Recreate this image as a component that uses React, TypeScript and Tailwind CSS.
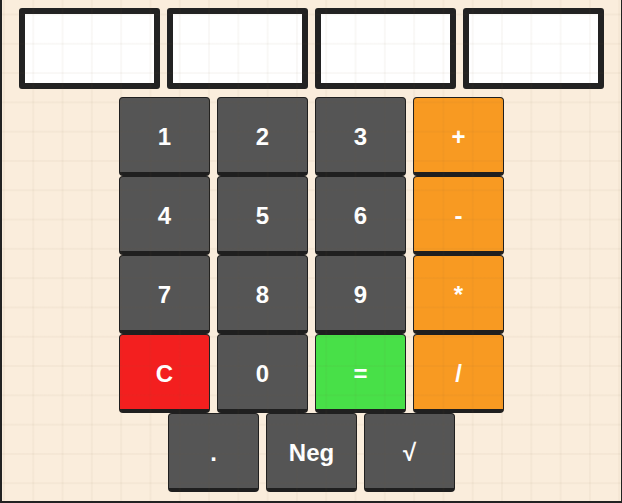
import React from 'react';

type Key = { label: string; tone?: 'num' | 'op' | 'clear' | 'eq' };

const rows: Key[][] = [
  [{ label: '1' }, { label: '2' }, { label: '3' }, { label: '+', tone: 'op' }],
  [{ label: '4' }, { label: '5' }, { label: '6' }, { label: '-', tone: 'op' }],
  [{ label: '7' }, { label: '8' }, { label: '9' }, { label: '*', tone: 'op' }],
  [{ label: 'C', tone: 'clear' }, { label: '0' }, { label: '=', tone: 'eq' }, { label: '/', tone: 'op' }],
  [{ label: '.' }, { label: 'Neg' }, { label: '√' }],
];

const toneClass = {
  num: 'bg-[#555555]',
  op: 'bg-[#f89a22]',
  clear: 'bg-[#f31f1f]',
  eq: 'bg-[#48e048]',
};

function CalcKey({ k }: { k: Key }) {
  return (
    <button
      className={`w-[91px] h-[79px] pt-1 rounded-[4px] border border-b-[4px] border-[#1f1f1f] text-white font-bold text-[24px] flex items-center justify-center ${toneClass[k.tone ?? 'num']}`}
    >
      {k.label}
    </button>
  );
}

export default function App() {
  return (
    <div
      className="relative w-[622px] h-[503px] overflow-hidden bg-[#faeddc] border-l-2 border-b-2 border-r border-[#222222]"
      style={{ fontFamily: '"Liberation Sans", Arial, sans-serif' }}
    >
      <div className="flex flex-col items-center pt-[8px]">
        <div className="flex gap-[7px]">
          {[0, 1, 2, 3].map((i) => (
            <div key={i} className="w-[141px] h-[81px] rounded-[3px] border-[6px] border-[#222222] bg-white" />
          ))}
        </div>

        <div className="mt-[8px] flex flex-col items-center">
          {rows.map((row, r) => (
            <div key={r} className="flex gap-[7px]">
              {row.map((k) => (
                <CalcKey key={k.label} k={k} />
              ))}
            </div>
          ))}
        </div>
      </div>

      {/* faint grid paper over everything */}
      <div className="pointer-events-none absolute inset-0 bg-[linear-gradient(to_right,rgba(120,90,50,0.045)_1.5px,transparent_1.5px),linear-gradient(to_bottom,rgba(120,90,50,0.045)_1.5px,transparent_1.5px)] bg-[size:29.3px_29.3px] bg-[position:1px_13.5px]" />
    </div>
  );
}
